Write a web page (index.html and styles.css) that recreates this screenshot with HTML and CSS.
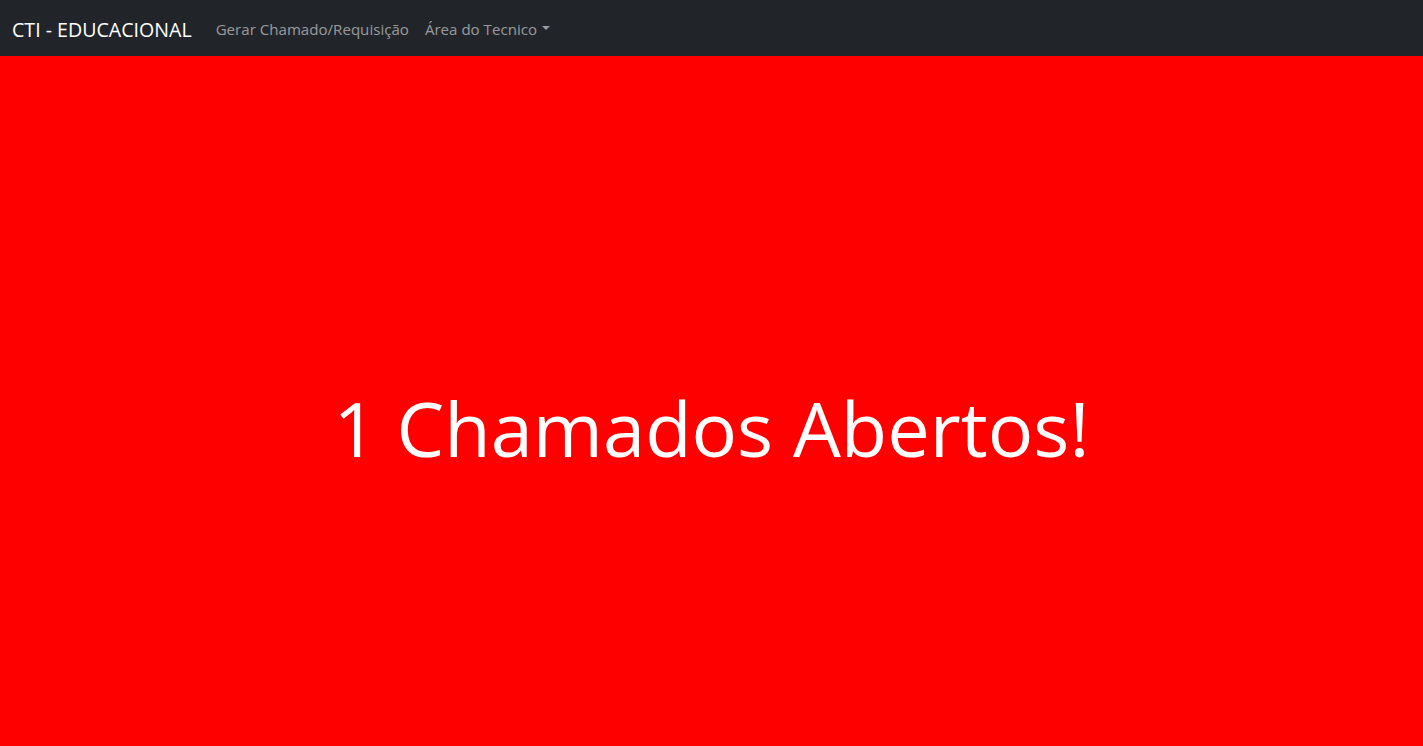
FILE: index.html
```html
<!DOCTYPE html>
<html lang="pt-BR">
<head>
<meta charset="utf-8">
<title>CTI - EDUCACIONAL</title>
<link rel="stylesheet" href="styles.css">
</head>
<body>
<nav class="navbar">
  <a class="brand" href="#">CTI - EDUCACIONAL</a>
  <ul class="nav">
    <li><a class="nav-link" href="#">Gerar Chamado/Requisição</a></li>
    <li><a class="nav-link dropdown" href="#">Área do Tecnico<span class="caret"></span></a></li>
  </ul>
</nav>
<main class="alert-screen">
  <h1 class="display">1 Chamados Abertos!</h1>
</main>
</body>
</html>
```
FILE: styles.css
```css
* { box-sizing: border-box; }
html, body { height: 100%; }
body {
  margin: 0;
  font-family: "Open Sans", "Noto Sans", sans-serif;
  display: flex;
  flex-direction: column;
  background: #ff0000;
}
.navbar {
  height: 56px;
  background: #212529;
  display: flex;
  align-items: center;
  padding: 2px 12px 0;
  flex-shrink: 0;
}
.brand {
  color: #fff;
  text-decoration: none;
  font-size: 19.6px;
  margin-right: 16px;
  padding-top: 1px;
}
.nav {
  list-style: none;
  margin: 0;
  padding: 0;
  display: flex;
}
.nav-link {
  color: rgba(255,255,255,.55);
  text-decoration: none;
  font-size: 15.1px;
  padding: 8px;
  display: flex;
  align-items: center;
}
.caret {
  display: inline-block;
  margin-left: 5px;
  border-top: 4px solid rgba(255,255,255,.55);
  border-left: 4px solid transparent;
  border-right: 4px solid transparent;
  margin-top: -2px;
}
.alert-screen {
  flex: 1;
  display: flex;
  justify-content: center;
  align-items: center;
  padding-top: 54px;
}
.display {
  margin: 0;
  color: #fff;
  font-weight: 400;
  font-size: 75.8px;
  line-height: 1.2;
}
```
